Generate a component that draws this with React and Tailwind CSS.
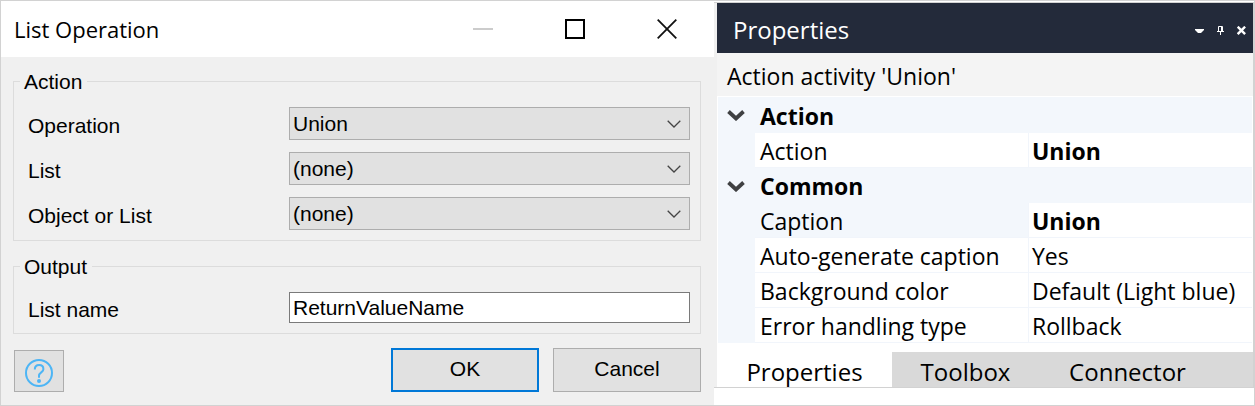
import React from "react";

const operationFields = [
  { id: "operation", label: "Operation", value: "Union" },
  { id: "list", label: "List", value: "(none)" },
  { id: "object-or-list", label: "Object or List", value: "(none)" },
];

const groups = [
  { name: "Action", rows: [{ name: "Action", value: "Union", bold: true }] },
  {
    name: "Common",
    rows: [
      { name: "Caption", value: "Union", bold: true, selected: true },
      { name: "Auto-generate caption", value: "Yes" },
      { name: "Background color", value: "Default (Light blue)" },
      { name: "Error handling type", value: "Rollback" },
    ],
  },
];

function Field({ id, label, children }) {
  return (
    <div className="grid grid-cols-[261px_1fr] items-center">
      <label htmlFor={id} className="pt-1">{label}</label>
      {children}
    </div>
  );
}

function SelectBox({ id, value }) {
  return (
    <div className="grid">
      <select
        id={id}
        defaultValue={value}
        className="col-start-1 row-start-1 h-[33px] w-full appearance-none rounded-none border border-[#adadad] bg-[#e1e1e1] px-[3px] text-black"
      >
        <option>{value}</option>
      </select>
      <svg className="pointer-events-none col-start-1 row-start-1 mr-[9px] h-2 w-[14px] self-center justify-self-end" viewBox="0 0 14 8" fill="none" stroke="#444" strokeWidth="1.3">
        <path d="M.7 .8 7 7 13.3 .8" />
      </svg>
    </div>
  );
}

function Group({ legend, className, children }) {
  return (
    <fieldset className={"border border-[#dcdcdc] pb-[10px] pl-[14px] pr-[10px] " + className}>
      <legend className="-ml-2 pl-1 pr-[5px] pt-0.5 leading-6">{legend}</legend>
      <div className="flex flex-col gap-3 pt-[13px]">{children}</div>
    </fieldset>
  );
}

function ListOperationDialog() {
  return (
    <section className="flex flex-col bg-[#f0f0f0] font-['Liberation_Sans',sans-serif] text-[21px] leading-6">
      <header className="flex h-14 items-center justify-between bg-white pl-[13px] pr-[37px]">
        <h1 className="font-['Open_Sans',sans-serif] text-[22px] leading-8">List Operation</h1>
        <div className="flex items-center gap-[72px]">
          <button type="button" aria-label="Minimize" disabled>
            <svg className="h-5 w-5" viewBox="0 0 20 20"><path d="M0 10h20" stroke="#ccc" strokeWidth="2" /></svg>
          </button>
          <button type="button" aria-label="Maximize">
            <svg className="h-5 w-5" viewBox="0 0 20 20"><path d="M1 1h18v18H1z" fill="none" stroke="#000" strokeWidth="2" /></svg>
          </button>
          <button type="button" aria-label="Close">
            <svg className="h-5 w-5" viewBox="0 0 20 20"><path d="M.7 .7l18.6 18.6M19.3 .7.7 19.3" stroke="#111" strokeWidth="1.8" /></svg>
          </button>
        </div>
      </header>
      <form className="flex grow flex-col pl-3 pr-[13px] pt-[11px]" onSubmit={(e) => e.preventDefault()}>
        <Group legend="Action" className="">
          {operationFields.map((f) => (
            <Field key={f.id} id={f.id} label={f.label}>
              <SelectBox id={f.id} value={f.value} />
            </Field>
          ))}
        </Group>
        <Group legend="Output" className="mt-3">
          <Field id="list-name" label="List name">
            <input id="list-name" type="text" defaultValue="ReturnValueName" className="h-[31px] w-full border border-[#7a7a7a] bg-white px-[3px]" />
          </Field>
        </Group>
        <div className="mt-[14px] flex items-end gap-[14px]">
          <button type="button" aria-label="Help" className="ml-px mr-auto flex h-[42px] w-[50px] items-center justify-center border border-[#adadad] bg-[#e1e1e1] pt-1">
            <svg className="h-7 w-7" viewBox="0 0 28 28" fill="none" stroke="#4db5f5" strokeWidth="2">
              <circle cx="14" cy="14" r="13" />
              <path d="M9.8 10.6c0-2.7 1.7-4.5 4.3-4.5s4.3 1.7 4.3 4.1c0 3-4.4 3.3-4.4 6.500v2" />
              <circle cx="14" cy="22" r="2" fill="#4db5f5" stroke="none" />
            </svg>
          </button>
          <button type="submit" className="h-11 w-[148px] border-2 border-[#0078d7] bg-[#e1e1e1] pb-[2px]">OK</button>
          <button type="button" className="h-11 w-[148px] border border-[#adadad] bg-[#e1e1e1] pb-[2px]">Cancel</button>
        </div>
      </form>
    </section>
  );
}

function PropertyGroup({ group, first }) {
  return (
    <tbody>
      <tr className={first ? "h-9" : "h-[35px]"}>
        <td className="bg-[#f3f7fc] pl-[9px]">
          <button type="button" aria-label={"Collapse " + group.name} aria-expanded="true" className="block">
            <svg className="h-3 w-[18px]" viewBox="0 0 18 12" fill="none" stroke="#3f4042" strokeWidth="3.8">
              <path d="M1.500 2.500 9 9.500 16.500 2.500" />
            </svg>
          </button>
        </td>
        <th colSpan={2} scope="rowgroup" className="bg-[#f3f7fc] pl-[5px] pt-px text-left font-bold">{group.name}</th>
      </tr>
      {group.rows.map((row) => (
        <tr key={row.name} className="h-[35px]">
          <td className="bg-[#f3f7fc]" />
          <th scope="row" className={"border-b border-r border-[#f1f5fb] pl-[5px] pt-px text-left font-normal " + (row.selected ? "bg-[#f3f7fc]" : "bg-white")}>{row.name}</th>
          <td className={"border-b border-[#f1f5fb] bg-white pl-[3px] pt-px " + (row.bold ? "font-bold" : "")}>{row.value}</td>
        </tr>
      ))}
    </tbody>
  );
}

function PropertiesPanel() {
  return (
    <section className="flex flex-col bg-white pt-px font-['Open_Sans',sans-serif] text-[23px] leading-[30px]">
      <div className="border-b border-t border-[#d2d2d2]">
        <div className="border-l-[3px] border-r border-l-[#f0f0f0] border-r-[#d2d2d2]">
          <header className="flex h-[50px] items-center justify-between bg-[#232a3a] pl-4 pr-[7px] pt-1 text-white">
            <h2 className="text-2xl leading-8">Properties</h2>
            <div className="flex items-center gap-3">
              <button type="button" aria-label="Window options">
                <svg className="h-[9px] w-[9px]" viewBox="0 0 9 9" fill="#fff"><path d="M0 3h9v1L6 7H3L0 4z" /></svg>
              </button>
              <button type="button" aria-label="Auto hide">
                <svg className="h-[9px] w-[9px]" viewBox="0 0 9 9" fill="none" stroke="#fff"><path d="M2.500 5.500V.5h4v5M5.500 0v6M1 5.500h7M4.500 6v3" /></svg>
              </button>
              <button type="button" aria-label="Close panel">
                <svg className="h-[9px] w-[9px]" viewBox="0 0 9 9" stroke="#fff" strokeWidth="2.4"><path d="M.7 .7l7.400 7.400M8.100 .7.7 8.100" /></svg>
              </button>
            </div>
          </header>
          <p className="h-11 border-b border-white bg-[#f4f4f4] pl-[10px] pt-2">Action activity 'Union'</p>
          <table className="ml-px w-[calc(100%-2px)] table-fixed border-separate border-spacing-0">
            <colgroup>
              <col className="w-[37px]" />
              <col className="w-[51.3%]" />
              <col />
            </colgroup>
            {groups.map((g, i) => <PropertyGroup key={g.name} group={g} first={i === 0} />)}
          </table>
          <nav className="mt-[9px] flex bg-[#d9d9d9] text-2xl leading-8">
            <button type="button" className="h-[35px] w-[175px] bg-white pt-1">Properties</button>
            <button type="button" className="h-[35px] w-[147px] pt-1">Toolbox</button>
            <button type="button" className="h-[35px] w-[177px] pt-1">Connector</button>
          </nav>
        </div>
      </div>
    </section>
  );
}

export default function App() {
  return (
    <main className="grid min-h-screen grid-cols-[713fr_540fr] border border-[#d2d2d2] bg-white text-black">
      <ListOperationDialog />
      <PropertiesPanel />
    </main>
  );
}
